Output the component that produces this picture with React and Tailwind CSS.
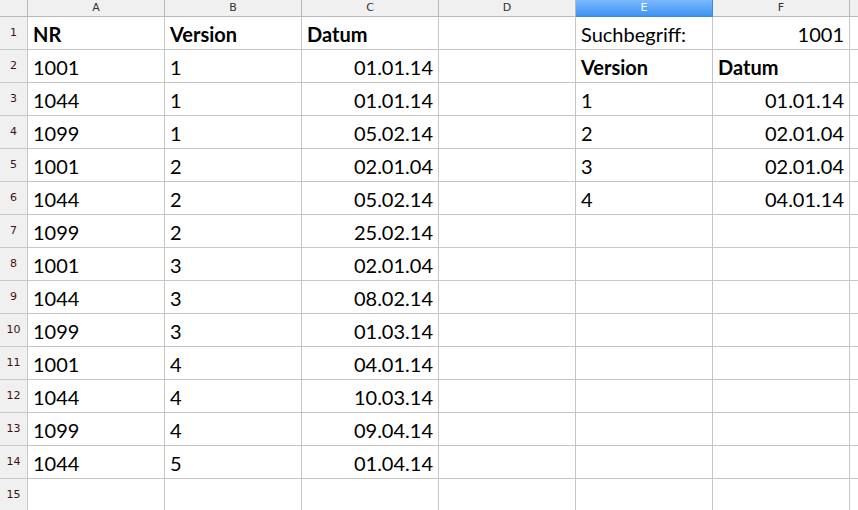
const cols=["A","B","C","D","E","F"];
const data=[
[["NR","b"],["Version","b"],["Datum","b"],"",["Suchbegriff:"],["1001","r"]],
["1001","1",["01.01.14","r"],"",["Version","b"],["Datum","b"]],
["1044","1",["01.01.14","r"],"","1",["01.01.14","r"]],
["1099","1",["05.02.14","r"],"","2",["02.01.04","r"]],
["1001","2",["02.01.04","r"],"","3",["02.01.04","r"]],
["1044","2",["05.02.14","r"],"","4",["04.01.14","r"]],
["1099","2",["25.02.14","r"],"","",""],
["1001","3",["02.01.04","r"],"","",""],
["1044","3",["08.02.14","r"],"","",""],
["1099","3",["01.03.14","r"],"","",""],
["1001","4",["04.01.14","r"],"","",""],
["1044","4",["10.03.14","r"],"","",""],
["1099","4",["09.04.14","r"],"","",""],
["1044","5",["01.04.14","r"],"","",""],
["","","","","",""],
];
export default function App(){
return(<div className="w-[858px] h-[510px] overflow-hidden bg-white" style={{fontFamily:"Lato, 'Open Sans', sans-serif"}}>
<div className="grid grid-cols-[28px_137px_137px_137px_137px_137px_137px_8px] grid-rows-[17px_repeat(15,33px)]">
<div className="bg-[#f0f0f0] border-r border-b border-[#b8b8b8]"/>
{cols.map(c=><div key={c} className={`flex items-center justify-center text-[11px] border-r border-b ${c==="E"?"bg-gradient-to-b from-[#7bbaff] to-[#3a93f3] text-white border-[#3a88e0]":"bg-[#f0f0f0] text-[#333] border-[#b8b8b8]"}`} style={{fontFamily:"'DejaVu Sans',sans-serif"}}>{c}</div>)}
<div className="bg-[#f0f0f0] border-b border-[#b8b8b8]"/>
{data.map((row,i)=>[
<div key={"h"+i} className="bg-[#f0f0f0] border-r border-b border-[#c8c8c8] flex items-center justify-center text-[11px] text-[#401010]" style={{fontFamily:"'DejaVu Sans',sans-serif"}}>{i+1}</div>,
...row.map((c,j)=>{const [t,f]=Array.isArray(c)?c:[c,""];return <div key={i+"-"+j} className={`border-r border-b border-[#c6c6c6] px-[5px] pt-[1px] flex items-center text-[20px] text-black ${f==="b"?"font-bold":""} ${f==="r"?"justify-end":""}`}>{t}</div>}),
<div key={"x"+i} className="border-b border-[#c6c6c6]"/>
])}
</div></div>);}
